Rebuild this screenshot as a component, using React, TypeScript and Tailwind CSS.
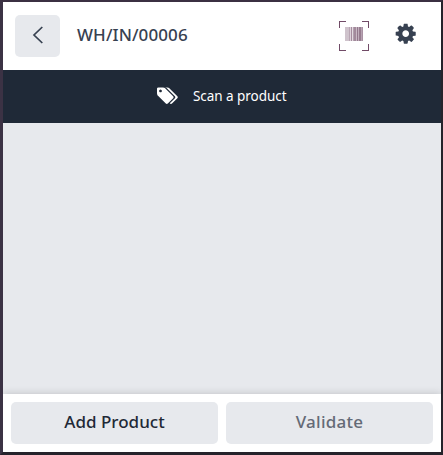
const bars: [number, number, string][] = [
  [6, 4, '#cfc3cc'],
  [10, 1, '#b9a6b4'],
  [11, 1, '#ddd2da'],
  [12, 1, '#a58c9e'],
  [13, 1, '#e3dbe1'],
  [14, 1, '#b39fae'],
  [15, 2, '#a28a9b'],
  [17, 1, '#c9b9c5'],
  [18, 1, '#94788c'],
  [19, 1, '#c0aebb'],
  [20, 2, '#977c8f'],
  [22, 1, '#b7a3b2'],
  [23, 1, '#a991a3'],
];

function BarcodeIcon() {
  return (
    <svg width="30" height="30" viewBox="0 0 30 30" shapeRendering="crispEdges">
      <path d="M.5 7V.5H7M23 .5h6.500V7M29.500 23v6.500H23M7 29.500H.5V23" fill="none" stroke="#714b67" />
      {bars.map(([x, w, fill]) => (
        <rect key={x} x={x} y="6" width={w} height="14" fill={fill} />
      ))}
    </svg>
  );
}

function CogIcon() {
  return (
    <svg width="23.4" height="23.4" viewBox="0 0 1792 1792" fill="currentColor">
      <path d="M1152 896q0-106-75-181t-181-75-181 75-75 181 75 181 181 75 181-75 75-181zm512-109v222q0 12-8 23t-20 13l-185 28q-19 54-39 91 35 50 107 138 10 12 10 25t-9 23q-27 37-99 108t-94 71q-12 0-26-9l-138-108q-44 23-91 38-16 136-29 186-7 28-36 28h-222q-14 0-24.5-8.5t-11.5-21.5l-28-184q-49-16-90-37l-141 107q-10 9-25 9-14 0-25-11-126-114-165-168-7-10-7-23 0-12 8-23 15-21 51-66.5t54-70.5q-27-50-41-99l-183-27q-13-2-21-12.5t-8-23.5v-222q0-12 8-23t19-13l186-28q14-46 39-92-40-57-107-138-10-12-10-24 0-10 9-23 26-36 98.5-107.5t94.5-71.5q13 0 26 10l138 107q44-23 91-38 16-136 29-186 7-28 36-28h222q14 0 24.5 8.5t11.5 21.5l28 184q49 16 90 37l142-107q9-9 24-9 13 0 25 10 129 119 165 170 7 8 7 22 0 12-8 23-15 21-51 66.500t-54 70.500q26 50 41 98l183 28q13 2 21 12.500t8 23.500z" />
    </svg>
  );
}

function TagsIcon() {
  return (
    <svg width="21" height="19.6" viewBox="0 0 1920 1792" fill="currentColor">
      <path d="M448 448q0-53-37.500-90.500t-90.500-37.500-90.500 37.500-37.500 90.500 37.500 90.500 90.500 37.500 90.500-37.500 37.500-90.500zm1067 576q0 53-37 90l-491 492q-39 37-91 37-53 0-90-37l-715-716q-38-37-64.500-101t-26.500-117v-416q0-52 38-90t90-38h416q53 0 117 26.500t102 64.500l715 714q37 39 37 91zm384 0q0 53-37 90l-491 492q-39 37-91 37-36 0-59-14t-53-45l470-470q37-37 37-90 0-52-37-91l-715-714q-38-38-102-64.500t-117-26.500h224q53 0 117 26.500t102 64.500l715 714q37 39 37 91z" />
    </svg>
  );
}

export default function App() {
  return (
    <div className="h-[455px] w-[443px] border-t-2 border-r-2 border-b-[3px] border-l-[3px] border-t-[#3b3042] border-r-[#25232b] border-b-[#25232b] border-l-[#3b3244] font-['Noto_Sans',sans-serif]">
      <div className="flex h-full flex-col overflow-hidden bg-[#e7e9ed]">
        <header className="flex h-[68px] shrink-0 items-start bg-white pt-[13px] pl-3 text-[#374151]">
          <button className="flex h-[42px] w-[45px] items-center justify-center rounded-[5px] bg-[#e7e9ed] pb-[2px]">
            <svg width="12" height="18" viewBox="0 0 12 18" fill="none" stroke="currentColor" strokeWidth="1.7">
              <path d="M10.300 1 2 9l8.300 8" />
            </svg>
          </button>
          <h1 className="ml-[17px] w-[262px] pt-2 text-[17px] leading-6 font-medium tracking-[0.1px] whitespace-nowrap">WH/IN/00006</h1>
          <div className="mt-[6px] h-[30px] w-[30px] shrink-0">
            <BarcodeIcon />
          </div>
          <div className="mt-[7px] ml-[25px] shrink-0">
            <CogIcon />
          </div>
        </header>
        <div className="flex h-[53px] shrink-0 items-center bg-[#1f2937] pb-[2px] pl-[154px] text-white">
          <TagsIcon />
          <span className="ml-[15px] text-[13.500px] leading-5 tracking-[-0.05px] whitespace-nowrap">Scan a product</span>
        </div>
        <main className="flex-1" />
        <footer className="flex h-[58px] shrink-0 gap-2 bg-white p-2 text-[17px] font-medium shadow-[0_0_8px_rgba(0,0,0,0.18)]">
          <button className="h-[42px] flex-1 rounded-[5px] bg-[#e7e9ed] pb-[2px] text-[#1f2937]">Add Product</button>
          <button className="h-[42px] flex-1 rounded-[5px] bg-[#e7e9ed] pb-[2px] tracking-[0.25px] text-[#646a76]">Validate</button>
        </footer>
      </div>
    </div>
  );
}
